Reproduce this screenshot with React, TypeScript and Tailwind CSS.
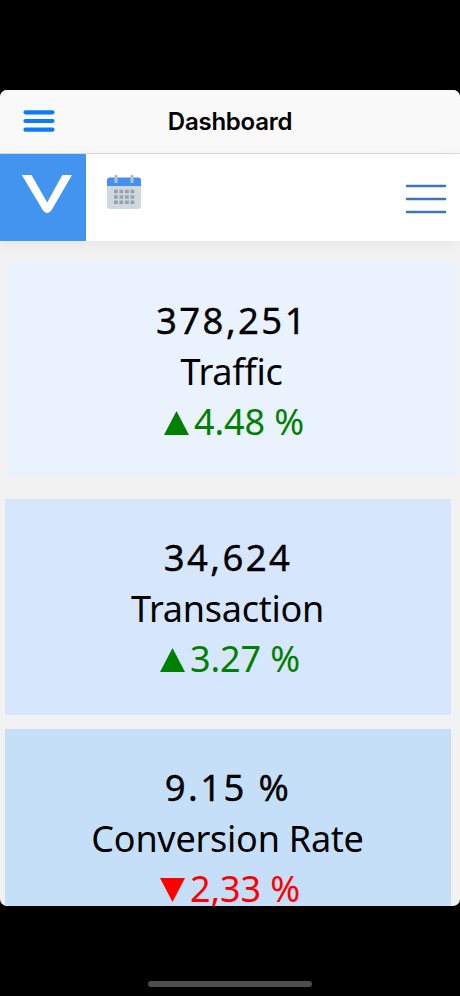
import clsx from "clsx";

type Metric = {
  value: string;
  label: string;
  change: string;
  up: boolean;
  card: string;
};

const metrics: Metric[] = [
  { value: "378,251", label: "Traffic", change: "4.48 %", up: true, card: "ml-[8px] mr-[4px] mb-[22px] bg-[#eaf2fe]" },
  { value: "34,624", label: "Transaction", change: "3.27 %", up: true, card: "ml-[5px] mr-[9px] mb-[14px] bg-[#d6e6fc]" },
  { value: "9.15 %", label: "Conversion Rate", change: "2,33 %", up: false, card: "ml-[5px] mr-[9px] bg-[#c6dff9]" },
];

function MenuIcon() {
  return (
    <svg width="32" height="24" viewBox="0 0 32 24" stroke="#0b7bfb" strokeWidth="4.200" strokeLinecap="round">
      <path d="M2.500 2.300h27M2.500 11h27M2.500 19.700h27" />
    </svg>
  );
}

function CalendarIcon() {
  return (
    <svg width="36" height="36" viewBox="0 0 36 36" fill="none">
      <path d="M1 12h34v20a3 3 0 0 1-3 3H4a3 3 0 0 1-3-3z" fill="#cfd8dc" />
      <path d="M1 12V6.500a3 3 0 0 1 3-3h28a3 3 0 0 1 3 3V12z" fill="#4490f0" />
      <path d="M10 2.500v5M26 2.500v5" stroke="#b4bec6" strokeWidth="3.400" strokeLinecap="round" />
      <path
        d="M8 17.500h20.500M8 23h20.500M8 28.300h20.500"
        stroke="#93a3ad"
        strokeWidth="3.600"
        strokeDasharray="3.800 1.700"
      />
    </svg>
  );
}

function Header() {
  return (
    <header className="h-16 shrink-0 bg-[#f9f9f9] border-b border-[#dcdcdc] grid grid-cols-[1fr_auto_1fr] items-center">
      <button className="pl-[23px] justify-self-start">
        <MenuIcon />
      </button>
      <h1 className="font-['Inter',sans-serif] text-[24px] font-semibold tracking-[-0.250px] text-black">Dashboard</h1>
    </header>
  );
}

function Toolbar() {
  return (
    <div className="relative h-[86.500px] shrink-0 bg-white flex shadow-[0_2px_14px_rgba(0,0,0,0.06)]">
      <div className="w-[86px] bg-[#4294ee] pl-[21px] pt-[20px]">
        <svg width="52" height="42" viewBox="0 0 52 42" fill="white">
          <path d="M.8 1H10.500L26.200 28.500 41.300 1H51L30.500 36.300Q26.200 42 21.900 36.300Z" />
        </svg>
      </div>
      <button className="ml-[20px] mt-[20px] self-start">
        <CalendarIcon />
      </button>
      <button className="ml-auto mr-[13px] mt-[29px] self-start">
        <svg width="42" height="32" viewBox="0 0 42 32" stroke="#3f74bd" strokeWidth="2.600" strokeLinecap="round">
          <path d="M2 3h38M2 16h38M2 29h38" />
        </svg>
      </button>
    </div>
  );
}

function MetricCard({ value, label, change, up, card }: Metric) {
  return (
    <section className={clsx("h-[215.500px] shrink-0 pt-[33px] text-center text-[36px] leading-[50px] text-black", card)}>
      <p className="mb-[2px] text-[36.500px] tracking-[2.400px] [-webkit-text-stroke:0.350px_black]">{value}</p>
      <p className="tracking-[-0.250px] pr-px">{label}</p>
      <p className={clsx("flex items-baseline justify-center gap-[5px] pl-[4px]", up ? "text-[#008000]" : "text-[#ff0000]")}>
        <svg width="25" height="24" viewBox="0 0 25 24" fill="currentColor">
          <path d={up ? "M12.500 0 25 24H0Z" : "M0 0H25L12.500 24Z"} />
        </svg>
        <span className="tracking-[-0.100px]">{change}</span>
      </p>
    </section>
  );
}

export default function App() {
  return (
    <div className="h-[996px] w-[460px] bg-black pt-[90px] font-['Noto_Sans',sans-serif] overflow-hidden flex flex-col items-center">
      <div className="w-full h-[816px] shrink-0 rounded-[7px] bg-[#f2f2f2] overflow-hidden flex flex-col">
        <Header />
        <Toolbar />
        <main className="flex flex-col pt-[21px]">
          {metrics.map((metric) => (
            <MetricCard key={metric.label} {...metric} />
          ))}
        </main>
      </div>

      {/* Home indicator */}
      <div className="mt-[75px] h-[6px] w-[164px] shrink-0 rounded-full bg-[#4d4d4d]" />
    </div>
  );
}
